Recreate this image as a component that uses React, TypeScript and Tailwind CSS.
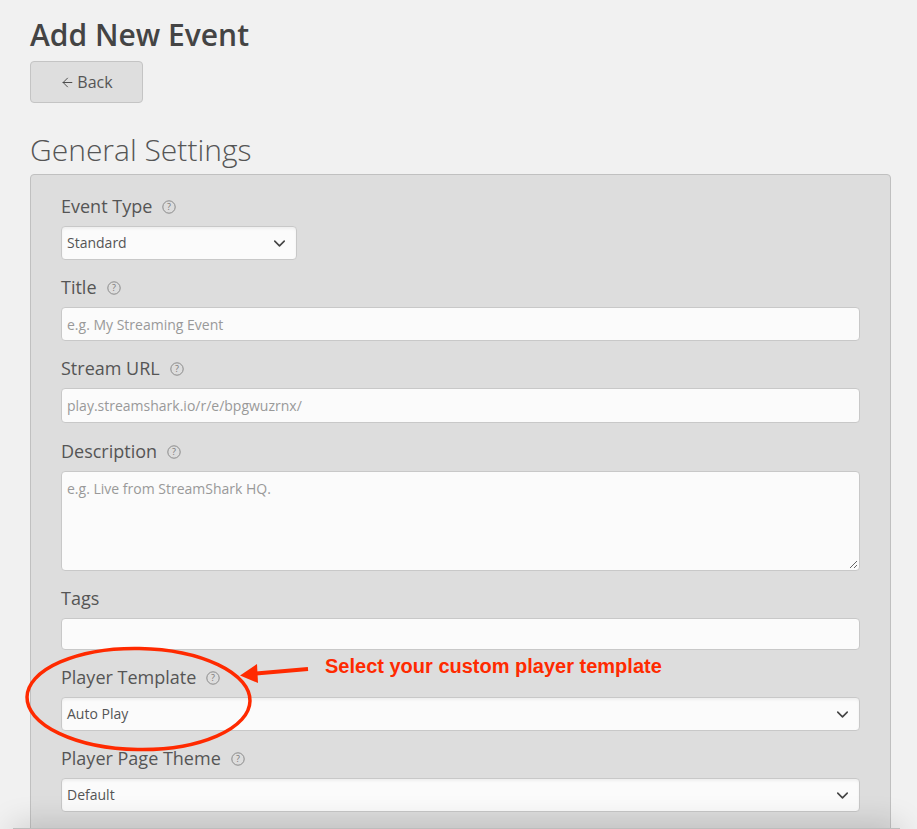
import { ArrowLeft, ChevronDown } from "lucide-react";

function Help() {
  return (
    <svg width="14" height="14" viewBox="0 0 14 14" className="ml-[10px] mt-[1px] shrink-0">
      <circle cx="7" cy="7" r="6.2" fill="none" stroke="#8a8a8a" strokeWidth="1" />
      <text x="7" y="10" textAnchor="middle" fontSize="9" fill="#777" fontFamily="'Open Sans', sans-serif">
        ?
      </text>
    </svg>
  );
}

function Label({ text, className }: { text: string; className: string }) {
  return (
    <div className={`flex items-center h-[24px] pb-[1px] text-[18px] text-[#555] ${className}`}>
      {text}
      <Help />
    </div>
  );
}

function Select({ value, className }: { value: string; className: string }) {
  return (
    <div
      className={`flex items-center justify-between h-[34px] pl-[5px] pr-[7px] bg-[#fbfbfb] border border-[#c8c8c8] rounded-[4px] text-[14px] text-[#555] shadow-[inset_0_2px_3px_rgba(0,0,0,0.05)] ${className}`}
    >
      <span className="-mt-[2px]">{value}</span>
      <ChevronDown size={19} strokeWidth={2} color="#444" />
    </div>
  );
}

function Input({ placeholder, className }: { placeholder: string; className: string }) {
  return (
    <div
      className={`flex items-center pl-[5px] bg-[#fbfbfb] border border-[#c8c8c8] rounded-[4px] text-[14px] text-[#999] ${className}`}
    >
      {placeholder}
    </div>
  );
}

export default function App() {
  return (
    <div className="relative h-[829px] w-[917px] overflow-hidden bg-[#f1f1f1] pl-[30px] pt-[17px] font-['Open_Sans',sans-serif]">
      <h1 className="text-[30px] leading-[36px] font-semibold text-[#444]">Add New Event</h1>

      <button className="mt-[8px] flex h-[42px] w-[113px] items-center justify-center gap-[2px] rounded-[4px] border border-[#c4c4c4] bg-[#dedede] text-[16px] text-[#555]">
        <ArrowLeft size={15} strokeWidth={1.5} color="#444" />
        Back
      </button>

      <h2 className="mt-[25px] text-[30px] leading-[44px] font-light text-[#555]">General Settings</h2>

      <div className="mt-[2px] h-[700px] w-[861px] rounded-t-[4px] border border-[#c0c0c0] bg-[#dddddd] pl-[30px] pr-[30px] pt-[20px]">
        <Label text="Event Type" className="" />
        <Select value="Standard" className="mt-[7px] w-[236px]" />

        <Label text="Title" className="mt-[16px]" />
        <Input placeholder="e.g. My Streaming Event" className="mt-[7px] h-[34px]" />

        <Label text="Stream URL" className="mt-[16px]" />
        <Input placeholder="play.streamshark.io/r/e/bpgwuzrnx/" className="mt-[7px] h-[35px]" />

        <Label text="Description" className="mt-[17px]" />
        <div className="relative mt-[7px] h-[100px] rounded-[4px] border border-[#c8c8c8] bg-[#fbfbfb] pl-[5px] pt-[6px] text-[14px] text-[#999]">
          e.g. Live from StreamShark HQ.
          <svg width="9" height="9" viewBox="0 0 9 9" className="absolute bottom-[1px] right-[1px]">
            <path d="M1 8 8 1M5 8 8 5" stroke="#666" strokeWidth="1" />
          </svg>
        </div>

        <div className="mt-[16px] flex h-[24px] items-center pb-[1px] text-[18px] text-[#555]">Tags</div>
        <Input placeholder="" className="mt-[7px] h-[32px]" />

        <Label text="Player Template" className="mt-[16px]" />
        <Select value="Auto Play" className="mt-[7px]" />

        <Label text="Player Page Theme" className="mt-[16px]" />
        <Select value="Default" className="mt-[7px]" />
      </div>

      {/* sticky footer edge, only its shadow shows at the bottom */}
      <div className="absolute left-[13px] top-[828px] h-[20px] w-[887px] border-t border-[#bdbdbd] bg-[#f1f1f1] shadow-[0_0_32px_rgba(0,0,0,0.22)]" />

      {/* annotation drawn over the form */}
      <svg width="917" height="829" className="pointer-events-none absolute left-0 top-0">
        <ellipse cx="138.5" cy="699" rx="111.5" ry="50.5" fill="none" stroke="#ff2a00" strokeWidth="3.5" transform="rotate(1 138.5 699)" />
        <path d="M308 669 L256 673.5" stroke="#ff2a00" strokeWidth="4" fill="none" />
        <path d="M240 675.5 L257 664 L258 683 Z" fill="#ff2a00" />
      </svg>
      <div className="absolute left-[325px] top-[655px] font-['Liberation_Sans',sans-serif] text-[20px] font-bold leading-[22px] text-[#ff2a00]">
        Select your custom player template
      </div>
    </div>
  );
}
